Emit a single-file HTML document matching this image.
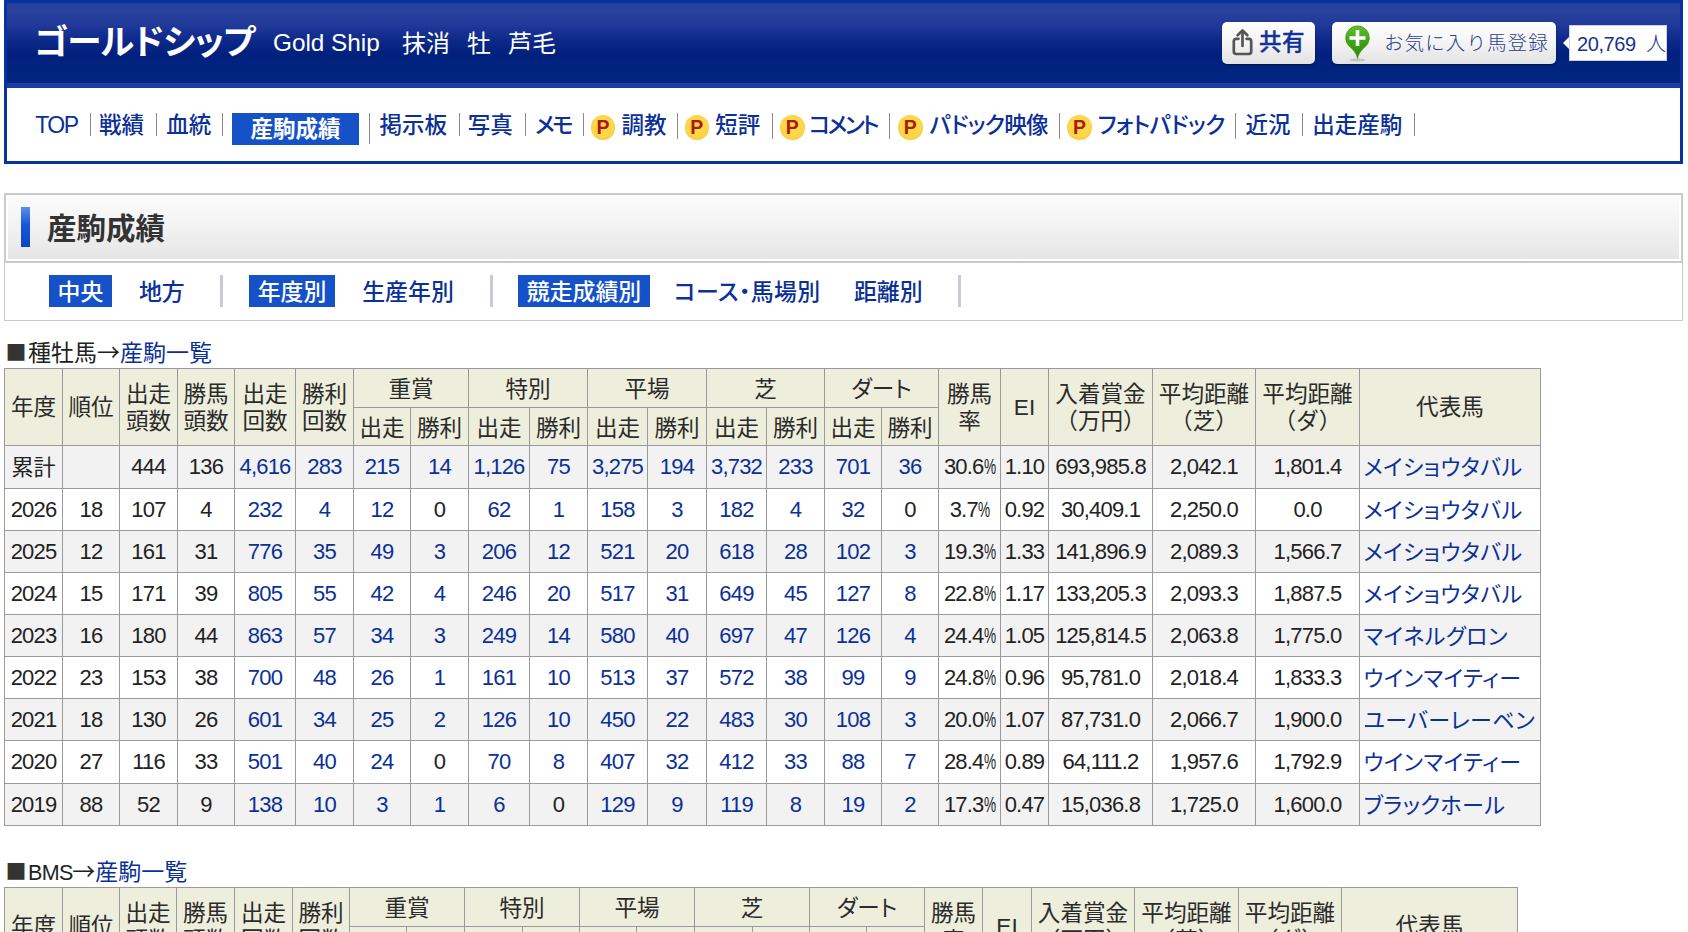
<!DOCTYPE html>
<html lang="ja">
<head>
<meta charset="utf-8">
<title>ゴールドシップ 産駒成績</title>
<style>
html,body{margin:0;padding:0;background:#fff;}
body{width:1688px;height:932px;overflow:hidden;position:relative;
  font-family:"Liberation Sans","Noto Sans CJK JP",sans-serif;
  font-size:22px;color:#222;line-height:1;}
a{color:#0b3098;text-decoration:none;}
.abs{position:absolute;white-space:nowrap;}
.jp{font-feature-settings:"palt";}

/* ---------- header box ---------- */
#hbox{position:absolute;left:4px;top:0;width:1673px;height:158px;
  border:3px solid #07339e;background:#fff;box-sizing:content-box;}
#hblue{position:absolute;left:0;top:0;width:1673px;height:80px;
  background:linear-gradient(#263f9b 0px,#2a429d 8px,#20399a 22px,#0c2888 38px,#01207d 52px,#01267f 80px);}
#hstrip{position:absolute;left:0;top:80px;width:1673px;height:5px;background:#1c3ba4;}
#hname{left:27px;top:22px;font-size:34.5px;font-weight:bold;color:#fff;letter-spacing:-0.6px;}
#hen{left:266px;top:28px;font-size:24.3px;color:#fff;}
#hinfo{left:395px;top:29px;font-size:24px;color:#fff;}
.btn{position:absolute;top:19px;height:42px;border-radius:5px;
  background:linear-gradient(#ffffff,#f4f4f4 50%,#e2e2e2);box-shadow:0 1px 2px rgba(0,0,0,.4);}
#bshare{left:1215px;width:93px;}
#bfav{left:1325px;width:224px;}
#bcount{position:absolute;left:1562px;top:22px;width:98px;height:36px;background:#fff;border:1px solid #c9d2ea;box-sizing:border-box;}
#bcount i{position:absolute;left:-7px;top:11px;width:0;height:0;border-top:6px solid transparent;border-bottom:6px solid transparent;border-right:6px solid #fff;}

/* ---------- nav ---------- */
.nv{position:absolute;top:115px;font-weight:500;font-size:22.5px;color:#0b3098;white-space:nowrap;}
.sep{position:absolute;top:113px;width:1px;height:23px;background:#8a8a8a;}
.pico{position:absolute;top:115px;width:24.5px;height:24.5px;border-radius:50%;
  background:radial-gradient(circle at 50% 45%,#fddc4e 0,#fcd646 60%,#f5bf35 85%,#eaa528 100%);
  color:#b01808;font-weight:bold;font-size:19.5px;line-height:24.5px;text-align:center;font-style:normal;}
#navact{position:absolute;left:232px;top:113px;width:127px;height:32px;background:#1552c8;}
.nv.on{color:#fff;text-align:center;top:119px;font-weight:bold;}

/* ---------- section title ---------- */
#sec{position:absolute;left:4px;top:193px;width:1675px;height:66px;border:2px solid #cacaca;
  background:linear-gradient(#fcfcfc,#f4f4f4 40%,#e5e5e5);box-shadow:inset 0 0 0 2px #fff;}
#secbar{position:absolute;left:15.3px;top:11.7px;width:8.7px;height:40.6px;background:linear-gradient(#5d8df3,#1857d6 45%,#0b46c4);}
#sectit{left:41px;top:19px;font-size:29.5px;font-weight:bold;color:#333;}
#filt{position:absolute;left:4px;top:263px;width:1677px;height:57px;border:1px solid #c6c9d2;border-top:none;background:#fff;}
.fi{position:absolute;top:275px;height:32px;line-height:35px;overflow:hidden;font-size:22.9px;font-weight:500;color:#0b3098;white-space:nowrap;text-align:center;}
.fi.on{background:#1552c8;color:#fff;}
.fsep{position:absolute;top:275px;width:3px;height:32px;background:#c9c9d9;}

/* ---------- tables ---------- */
.cj{font-family:"Noto Sans CJK JP",sans-serif;}
.cap .sq{font-size:21px;color:#333;position:relative;top:-1px;margin:0 1.5px 0 0.5px;}
.cap{position:absolute;left:5px;font-size:23px;color:#222;white-space:nowrap;}
table{position:absolute;left:4px;border-collapse:collapse;table-layout:fixed;font-size:22px;}
td,th{border:1px solid #9a9a9a;padding:0;text-align:center;vertical-align:middle;font-weight:normal;white-space:nowrap;overflow:hidden;}
th{background:#eeeedc;line-height:27px;font-size:22.6px;color:#2b2b2b;}
tr.g td{background:#f2f2f2;}
td.l{text-align:left;padding-left:3.5px;letter-spacing:0.4px;}
.pc{display:inline-block;width:11.5px;transform:scaleX(0.62);transform-origin:0 50%;letter-spacing:0;}
td{padding-top:2px;}
th.g{padding-top:3px;}
th.m{padding-top:2px;}
td.n, td.n a{font-size:22px;letter-spacing:-0.8px;}
td.n{padding-top:0;}

</style>
</head>
<body>

<div id="hbox">
  <div id="hblue"></div>
  <div id="hstrip"></div>
  <div id="hname" class="abs jp">ゴールドシップ</div>
  <div id="hen" class="abs">Gold Ship</div>
  <div id="hinfo" class="abs"><span>抹消</span><span style="margin-left:17px">牡</span><span style="margin-left:17px">芦毛</span></div>
  <div id="bshare" class="btn">
    <svg class="abs" style="left:9px;top:5px" width="24" height="30" viewBox="0 0 24 30"><path d="M7.5 11.8H5.2Q2.8 11.8 2.8 14.2V24.6Q2.8 27 5.2 27H17.8Q20.2 27 20.2 24.6V14.2Q20.2 11.8 17.8 11.8H15.5" fill="none" stroke="#555" stroke-width="2.7" stroke-linecap="round"/><path d="M11.5 19V4.2M6.6 8.3L11.5 3.4L16.4 8.3" fill="none" stroke="#555" stroke-width="2.7" stroke-linecap="round" stroke-linejoin="round"/></svg>
    <span class="abs" style="left:37px;top:10px;font-size:22.5px;font-weight:500;-webkit-text-stroke:0.35px #12329a;color:#12329a;letter-spacing:0.6px">共有</span>
  </div>
  <div id="bfav" class="btn">
    <svg class="abs" style="left:12px;top:2px" width="28" height="40" viewBox="0 0 28 40"><defs><linearGradient id="pg" x1="0" y1="0" x2="0" y2="1"><stop offset="0" stop-color="#62bd2e"/><stop offset="0.45" stop-color="#44a418"/><stop offset="1" stop-color="#2b8a06"/></linearGradient></defs><ellipse cx="13.5" cy="36" rx="8" ry="1.5" fill="#c2c2c2"/><path d="M13.5 34.5C13 31 11 27.500 6.5 23.2A11.8 11.8 0 1 1 20.5 23.2C16 27.500 14 31 13.5 34.5Z" fill="url(#pg)" stroke="#3a9612" stroke-width="0.8"/><path d="M13.5 6V22M5.500 14H21.5" stroke="#fff" stroke-width="3.6" fill="none"/></svg>
    <span class="abs" style="left:52px;top:12px;font-size:19.5px;font-weight:300;color:#2a3f8f;letter-spacing:1.1px">お気に入り馬登録</span>
  </div>
  <div id="bcount"><i></i><span class="abs" style="left:7px;top:8px;font-size:20px;font-weight:300;color:#1a348c;letter-spacing:-0.4px">20,769&nbsp; 人</span></div>
</div>
<a class="nv jp" style="left:35.2px;letter-spacing:-1.5px;font-size:23px;top:114px">TOP</a>
<a class="nv jp" style="left:99.0px">戦績</a>
<a class="nv jp" style="left:166.3px">血統</a>
<a class="nv jp" style="left:379.4px">掲示板</a>
<a class="nv jp" style="left:467.7px">写真</a>
<a class="nv jp" style="left:535.0px;letter-spacing:-2.6px">メモ</a>
<a class="nv jp" style="left:621.4px">調教</a>
<a class="nv jp" style="left:715.2px">短評</a>
<a class="nv jp" style="left:808.8px;letter-spacing:-2.6px">コメント</a>
<a class="nv jp" style="left:929.4px;letter-spacing:-0.7px">パドック映像</a>
<a class="nv jp" style="left:1097.6px;letter-spacing:-0.6px">フォトパドック</a>
<a class="nv jp" style="left:1245.6px">近況</a>
<a class="nv jp" style="left:1312.2px">出走産駒</a>
<div id="navact"></div><a class="nv jp on" style="left:232px;width:127px">産駒成績</a>
<i class="sep" style="left:90px"></i>
<i class="sep" style="left:156px"></i>
<i class="sep" style="left:222px"></i>
<i class="sep" style="left:459px"></i>
<i class="sep" style="left:525px"></i>
<i class="sep" style="left:583px"></i>
<i class="sep" style="left:677px;height:26px"></i>
<i class="sep" style="left:772px;height:26px"></i>
<i class="sep" style="left:889px;height:26px"></i>
<i class="sep" style="left:1059px;height:26px"></i>
<i class="sep" style="left:1235px;height:26px"></i>
<i class="sep" style="left:1302px"></i>
<i class="sep" style="left:1414px"></i>
<i class="sep" style="left:369px;height:31px"></i>
<b class="pico" style="left:590.8px">P</b>
<b class="pico" style="left:684.6px">P</b>
<b class="pico" style="left:780.0px">P</b>
<b class="pico" style="left:898.0px">P</b>
<b class="pico" style="left:1067.3px">P</b>

<div id="sec">
  <div id="secbar"></div>
  <div id="sectit" class="abs">産駒成績</div>
</div>
<div id="filt"></div>
<a class="fi on" style="left:49.0px;width:63.0px">中央</a>
<a class="fi on" style="left:249.0px;width:86.0px">年度別</a>
<a class="fi on" style="left:518.0px;width:132.0px">競走成績別</a>
<a class="fi jp" style="left:138.4px;width:46.9px">地方</a>
<a class="fi jp" style="left:361.5px;width:93.0px">生産年別</a>
<a class="fi jp" style="left:674.0px;width:146.0px;letter-spacing:0.4px">コース・馬場別</a>
<a class="fi jp" style="left:853.0px;width:70.5px">距離別</a>
<i class="fsep" style="left:220px"></i>
<i class="fsep" style="left:490px"></i>
<i class="fsep" style="left:958px"></i>

<div class="cap" style="top:340px"><span class="cj sq">■</span>種牡馬<span class="cj">→</span><a>産駒一覧</a></div>
<table style="top:368px;width:1536px">
<colgroup><col style="width:58px"><col style="width:57px"><col style="width:58px"><col style="width:57px"><col style="width:61px"><col style="width:58px"><col style="width:57px"><col style="width:58px"><col style="width:61px"><col style="width:58px"><col style="width:60px"><col style="width:59px"><col style="width:60px"><col style="width:58px"><col style="width:57px"><col style="width:57px"><col style="width:62px"><col style="width:48px"><col style="width:104px"><col style="width:103px"><col style="width:104px"><col style="width:181px"></colgroup>
<tr style="height:39px">
<th rowspan="2">年度</th>
<th rowspan="2">順位</th>
<th rowspan="2" class="m">出走<br>頭数</th>
<th rowspan="2" class="m">勝馬<br>頭数</th>
<th rowspan="2" class="m">出走<br>回数</th>
<th rowspan="2" class="m">勝利<br>回数</th>
<th colspan="2" class="jp g">重賞</th>
<th colspan="2" class="jp g">特別</th>
<th colspan="2" class="jp g">平場</th>
<th colspan="2" class="jp g">芝</th>
<th colspan="2" class="jp g">ダート</th>
<th rowspan="2" class="m">勝馬<br>率</th>
<th rowspan="2">EI</th>
<th rowspan="2" class="m">入着賞金<br>（万円）</th>
<th rowspan="2" class="m">平均距離<br>（芝）</th>
<th rowspan="2" class="m">平均距離<br>（ダ）</th>
<th rowspan="2">代表馬</th>
</tr><tr style="height:38px">
<th class="g">出走</th><th class="g">勝利</th>
<th class="g">出走</th><th class="g">勝利</th>
<th class="g">出走</th><th class="g">勝利</th>
<th class="g">出走</th><th class="g">勝利</th>
<th class="g">出走</th><th class="g">勝利</th>
</tr>
<tr class="g" style="height:43px">
<td>累計</td>
<td class="n"></td>
<td class="n">444</td>
<td class="n">136</td>
<td class="n"><a>4,616</a></td>
<td class="n"><a>283</a></td>
<td class="n"><a>215</a></td>
<td class="n"><a>14</a></td>
<td class="n"><a>1,126</a></td>
<td class="n"><a>75</a></td>
<td class="n"><a>3,275</a></td>
<td class="n"><a>194</a></td>
<td class="n"><a>3,732</a></td>
<td class="n"><a>233</a></td>
<td class="n"><a>701</a></td>
<td class="n"><a>36</a></td>
<td class="n">30.6<span class="pc">%</span></td>
<td class="n">1.10</td>
<td class="n">693,985.8</td>
<td class="n">2,042.1</td>
<td class="n">1,801.4</td>
<td class="l jp"><a>メイショウタバル</a></td>
</tr>
<tr class="" style="height:42px">
<td class="n">2026</td>
<td class="n">18</td>
<td class="n">107</td>
<td class="n">4</td>
<td class="n"><a>232</a></td>
<td class="n"><a>4</a></td>
<td class="n"><a>12</a></td>
<td class="n">0</td>
<td class="n"><a>62</a></td>
<td class="n"><a>1</a></td>
<td class="n"><a>158</a></td>
<td class="n"><a>3</a></td>
<td class="n"><a>182</a></td>
<td class="n"><a>4</a></td>
<td class="n"><a>32</a></td>
<td class="n">0</td>
<td class="n">3.7<span class="pc">%</span></td>
<td class="n">0.92</td>
<td class="n">30,409.1</td>
<td class="n">2,250.0</td>
<td class="n">0.0</td>
<td class="l jp"><a>メイショウタバル</a></td>
</tr>
<tr class="g" style="height:42px">
<td class="n">2025</td>
<td class="n">12</td>
<td class="n">161</td>
<td class="n">31</td>
<td class="n"><a>776</a></td>
<td class="n"><a>35</a></td>
<td class="n"><a>49</a></td>
<td class="n"><a>3</a></td>
<td class="n"><a>206</a></td>
<td class="n"><a>12</a></td>
<td class="n"><a>521</a></td>
<td class="n"><a>20</a></td>
<td class="n"><a>618</a></td>
<td class="n"><a>28</a></td>
<td class="n"><a>102</a></td>
<td class="n"><a>3</a></td>
<td class="n">19.3<span class="pc">%</span></td>
<td class="n">1.33</td>
<td class="n">141,896.9</td>
<td class="n">2,089.3</td>
<td class="n">1,566.7</td>
<td class="l jp"><a>メイショウタバル</a></td>
</tr>
<tr class="" style="height:42px">
<td class="n">2024</td>
<td class="n">15</td>
<td class="n">171</td>
<td class="n">39</td>
<td class="n"><a>805</a></td>
<td class="n"><a>55</a></td>
<td class="n"><a>42</a></td>
<td class="n"><a>4</a></td>
<td class="n"><a>246</a></td>
<td class="n"><a>20</a></td>
<td class="n"><a>517</a></td>
<td class="n"><a>31</a></td>
<td class="n"><a>649</a></td>
<td class="n"><a>45</a></td>
<td class="n"><a>127</a></td>
<td class="n"><a>8</a></td>
<td class="n">22.8<span class="pc">%</span></td>
<td class="n">1.17</td>
<td class="n">133,205.3</td>
<td class="n">2,093.3</td>
<td class="n">1,887.5</td>
<td class="l jp"><a>メイショウタバル</a></td>
</tr>
<tr class="g" style="height:42px">
<td class="n">2023</td>
<td class="n">16</td>
<td class="n">180</td>
<td class="n">44</td>
<td class="n"><a>863</a></td>
<td class="n"><a>57</a></td>
<td class="n"><a>34</a></td>
<td class="n"><a>3</a></td>
<td class="n"><a>249</a></td>
<td class="n"><a>14</a></td>
<td class="n"><a>580</a></td>
<td class="n"><a>40</a></td>
<td class="n"><a>697</a></td>
<td class="n"><a>47</a></td>
<td class="n"><a>126</a></td>
<td class="n"><a>4</a></td>
<td class="n">24.4<span class="pc">%</span></td>
<td class="n">1.05</td>
<td class="n">125,814.5</td>
<td class="n">2,063.8</td>
<td class="n">1,775.0</td>
<td class="l jp"><a>マイネルグロン</a></td>
</tr>
<tr class="" style="height:42px">
<td class="n">2022</td>
<td class="n">23</td>
<td class="n">153</td>
<td class="n">38</td>
<td class="n"><a>700</a></td>
<td class="n"><a>48</a></td>
<td class="n"><a>26</a></td>
<td class="n"><a>1</a></td>
<td class="n"><a>161</a></td>
<td class="n"><a>10</a></td>
<td class="n"><a>513</a></td>
<td class="n"><a>37</a></td>
<td class="n"><a>572</a></td>
<td class="n"><a>38</a></td>
<td class="n"><a>99</a></td>
<td class="n"><a>9</a></td>
<td class="n">24.8<span class="pc">%</span></td>
<td class="n">0.96</td>
<td class="n">95,781.0</td>
<td class="n">2,018.4</td>
<td class="n">1,833.3</td>
<td class="l jp"><a>ウインマイティー</a></td>
</tr>
<tr class="g" style="height:42px">
<td class="n">2021</td>
<td class="n">18</td>
<td class="n">130</td>
<td class="n">26</td>
<td class="n"><a>601</a></td>
<td class="n"><a>34</a></td>
<td class="n"><a>25</a></td>
<td class="n"><a>2</a></td>
<td class="n"><a>126</a></td>
<td class="n"><a>10</a></td>
<td class="n"><a>450</a></td>
<td class="n"><a>22</a></td>
<td class="n"><a>483</a></td>
<td class="n"><a>30</a></td>
<td class="n"><a>108</a></td>
<td class="n"><a>3</a></td>
<td class="n">20.0<span class="pc">%</span></td>
<td class="n">1.07</td>
<td class="n">87,731.0</td>
<td class="n">2,066.7</td>
<td class="n">1,900.0</td>
<td class="l jp"><a>ユーバーレーベン</a></td>
</tr>
<tr class="" style="height:43px">
<td class="n">2020</td>
<td class="n">27</td>
<td class="n">116</td>
<td class="n">33</td>
<td class="n"><a>501</a></td>
<td class="n"><a>40</a></td>
<td class="n"><a>24</a></td>
<td class="n">0</td>
<td class="n"><a>70</a></td>
<td class="n"><a>8</a></td>
<td class="n"><a>407</a></td>
<td class="n"><a>32</a></td>
<td class="n"><a>412</a></td>
<td class="n"><a>33</a></td>
<td class="n"><a>88</a></td>
<td class="n"><a>7</a></td>
<td class="n">28.4<span class="pc">%</span></td>
<td class="n">0.89</td>
<td class="n">64,111.2</td>
<td class="n">1,957.6</td>
<td class="n">1,792.9</td>
<td class="l jp"><a>ウインマイティー</a></td>
</tr>
<tr class="g" style="height:42px">
<td class="n">2019</td>
<td class="n">88</td>
<td class="n">52</td>
<td class="n">9</td>
<td class="n"><a>138</a></td>
<td class="n"><a>10</a></td>
<td class="n"><a>3</a></td>
<td class="n"><a>1</a></td>
<td class="n"><a>6</a></td>
<td class="n">0</td>
<td class="n"><a>129</a></td>
<td class="n"><a>9</a></td>
<td class="n"><a>119</a></td>
<td class="n"><a>8</a></td>
<td class="n"><a>19</a></td>
<td class="n"><a>2</a></td>
<td class="n">17.3<span class="pc">%</span></td>
<td class="n">0.47</td>
<td class="n">15,036.8</td>
<td class="n">1,725.0</td>
<td class="n">1,600.0</td>
<td class="l jp"><a>ブラックホール</a></td>
</tr>
</table>
<div class="cap" style="top:859px"><span class="cj sq">■</span><span style="font-size:21.5px;letter-spacing:-0.6px;margin-right:-0.5px">BMS</span><span class="cj">→</span><a>産駒一覧</a></div>
<table style="top:887px;width:1513px">
<colgroup><col style="width:58px"><col style="width:57px"><col style="width:57px"><col style="width:58px"><col style="width:58px"><col style="width:57px"><col style="width:57px"><col style="width:58px"><col style="width:58px"><col style="width:57px"><col style="width:57px"><col style="width:58px"><col style="width:58px"><col style="width:57px"><col style="width:57px"><col style="width:58px"><col style="width:58px"><col style="width:49px"><col style="width:103px"><col style="width:104px"><col style="width:103px"><col style="width:176px"></colgroup>
<tr style="height:39px">
<th rowspan="2">年度</th>
<th rowspan="2">順位</th>
<th rowspan="2" class="m">出走<br>頭数</th>
<th rowspan="2" class="m">勝馬<br>頭数</th>
<th rowspan="2" class="m">出走<br>回数</th>
<th rowspan="2" class="m">勝利<br>回数</th>
<th colspan="2" class="jp g">重賞</th>
<th colspan="2" class="jp g">特別</th>
<th colspan="2" class="jp g">平場</th>
<th colspan="2" class="jp g">芝</th>
<th colspan="2" class="jp g">ダート</th>
<th rowspan="2" class="m">勝馬<br>率</th>
<th rowspan="2">EI</th>
<th rowspan="2" class="m">入着賞金<br>（万円）</th>
<th rowspan="2" class="m">平均距離<br>（芝）</th>
<th rowspan="2" class="m">平均距離<br>（ダ）</th>
<th rowspan="2">代表馬</th>
</tr><tr style="height:38px">
<th class="g">出走</th><th class="g">勝利</th>
<th class="g">出走</th><th class="g">勝利</th>
<th class="g">出走</th><th class="g">勝利</th>
<th class="g">出走</th><th class="g">勝利</th>
<th class="g">出走</th><th class="g">勝利</th>
</tr>
<tr class="g" style="height:42px">
<td>累計</td>
<td class="n"></td>
<td class="n">444</td>
<td class="n">136</td>
<td class="n"><a>4,616</a></td>
<td class="n"><a>283</a></td>
<td class="n"><a>215</a></td>
<td class="n"><a>14</a></td>
<td class="n"><a>1,126</a></td>
<td class="n"><a>75</a></td>
<td class="n"><a>3,275</a></td>
<td class="n"><a>194</a></td>
<td class="n"><a>3,732</a></td>
<td class="n"><a>233</a></td>
<td class="n"><a>701</a></td>
<td class="n"><a>36</a></td>
<td class="n">30.6<span class="pc">%</span></td>
<td class="n">1.10</td>
<td class="n">693,985.8</td>
<td class="n">2,042.1</td>
<td class="n">1,801.4</td>
<td class="l jp"><a>メイショウタバル</a></td>
</tr>
</table>

</body>
</html>
